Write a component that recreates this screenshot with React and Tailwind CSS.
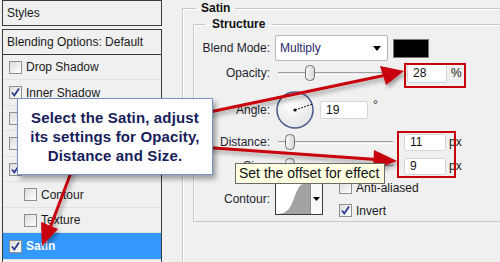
import React from "react";

function Check({ checked }) {
  return (
    <span className="inline-flex w-[13px] h-[13px] shrink-0 border border-[#8e8f8f] bg-gradient-to-br from-[#dcdcdc] to-[#ffffff] items-center justify-center">
      {checked && (
        <svg width="11" height="11" viewBox="0 0 11 11">
          <path d="M2 5.5 L4.3 8.5 L9 1.5" fill="none" stroke="#2a3a8f" strokeWidth="1.8" />
        </svg>
      )}
    </span>
  );
}

function Row({ h, label, checked, sub, selected, last }) {
  return (
    <div
      className={`flex items-center ${h} ${sub ? "pl-[21px]" : "pl-[6px]"} gap-[4px] ${
        selected ? "bg-[#3399ff] text-white font-bold" : "border-b border-[#e2e2e2] text-[#1a1a1a]"
      }`}
    >
      <Check checked={checked} />
      <span className="text-[12px] leading-none">{label}</span>
    </div>
  );
}

function Thumb() {
  return (
    <svg width="10" height="16" viewBox="0 0 10 16">
      <defs>
        <linearGradient id="tg" x1="0" x2="1">
          <stop offset="0" stopColor="#fbfbfb" />
          <stop offset="1" stopColor="#d6d6d6" />
        </linearGradient>
      </defs>
      <rect x="0.5" y="0.5" width="9" height="15" rx="4" fill="url(#tg)" stroke="#6f6f6f" />
    </svg>
  );
}

function Slider({ w, pos }) {
  return (
    <div className={`relative h-[16px] flex items-center ${w}`}>
      <div className="w-full h-[3px] border-t border-[#a0a0a0] border-b border-b-white bg-[#e6e6e6]" />
      <div className={`absolute top-0 ${pos}`}>
        <Thumb />
      </div>
    </div>
  );
}

function Input({ w, h, value }) {
  return (
    <div className={`${w} ${h} bg-white border border-[#d6d6d6] rounded-[2px] flex items-center pl-[5px] text-[12px] text-[#111]`}>
      {value}
    </div>
  );
}

export default function App() {
  return (
    <div
      className="relative w-[500px] h-[262px] overflow-hidden bg-[#f0f0f0] flex text-[#1a1a1a]"
      style={{ fontFamily: '"Liberation Sans", Arial, sans-serif' }}
    >
      {/* Left list panel */}
      <div className="w-[162px] shrink-0 pl-[2px] flex flex-col">
        <div className="h-[26px] border border-[#3c3c3c] flex items-center pl-[4px] text-[12px]">Styles</div>
        <div className="mt-[3px] flex-1 border-x border-t border-[#3c3c3c] flex flex-col">
          <div className="h-[25px] border-b border-[#3c3c3c] flex items-center pl-[4px] text-[12px]">
            Blending Options: Default
          </div>
          <Row h="h-[25px]" label="Drop Shadow" />
          <Row h="h-[26px]" label="Inner Shadow" checked />
          <Row h="h-[25px]" label="Outer Glow" />
          <Row h="h-[26px]" label="Inner Glow" />
          <Row h="h-[25px]" label="Bevel and Emboss" checked />
          <Row h="h-[26px]" label="Contour" sub />
          <Row h="h-[25px]" label="Texture" sub />
          <Row h="h-[26px]" label="Satin" checked selected />
          <div className="flex-1 border-t border-[#e2e2e2]" />
        </div>
      </div>

      {/* Right area */}
      <div className="ml-[20px] shrink-0">
        <fieldset className="w-[340px] mt-[1px] h-[300px] border border-[#c8c8c8] shadow-[inset_1px_1px_0_#ffffff]">
          <legend className="ml-[13px] px-[5px] text-[12px] leading-[14px] font-bold text-[#111]">Satin</legend>
          <fieldset className="ml-[10px] mt-[2px] w-[330px] border border-[#c8c8c8] shadow-[inset_1px_1px_0_#ffffff] pb-[6px]">
            <legend className="ml-[11px] px-[7px] text-[12px] leading-[14px] font-bold text-[#111]">Structure</legend>

            {/* Blend Mode */}
            <div className="mt-[4px] h-[26px] flex items-center">
              <div className="w-[76px] text-right text-[12px] text-[#1e1e2e]">Blend Mode:</div>
              <div className="ml-[5px] w-[113px] h-[26px] bg-white border border-[#b5b5b5] rounded-[2px] flex items-center justify-between pl-[4px] pr-[6px]">
                <span className="text-[12px] text-[#1f2566]">Multiply</span>
                <svg width="8" height="5" viewBox="0 0 8 5">
                  <path d="M0 0 L8 0 L4 5 Z" fill="#000" />
                </svg>
              </div>
              <div className="ml-[5px] w-[36px] h-[19px] bg-black border border-[#7a7a7a]" />
            </div>

            {/* Opacity */}
            <div className="mt-[1px] h-[22px] flex items-center">
              <div className="w-[76px] text-right text-[12px] text-[#1e1e2e]">Opacity:</div>
              <div className="ml-[8px]">
                <Slider w="w-[122px]" pos="left-[27px]" />
              </div>
              <div className="ml-[7px]">
                <Input w="w-[40px]" h="h-[19px]" value="28" />
              </div>
              <span className="ml-[4px] text-[12px]">%</span>
            </div>

            {/* Angle */}
            <div className="mt-[5px] h-[42px] flex items-center">
              <div className="w-[76px] text-right text-[12px] text-[#1e1e2e]">Angle:</div>
              <div className="ml-[6px] w-[38px] h-[38px]">
                <svg width="38" height="38" viewBox="0 0 38 38">
                  <defs>
                    <radialGradient id="cg" cx="0.4" cy="0.35" r="0.7">
                      <stop offset="0" stopColor="#ffffff" />
                      <stop offset="1" stopColor="#e4e4e4" />
                    </radialGradient>
                  </defs>
                  <circle cx="19" cy="19" r="18" fill="url(#cg)" stroke="#47598a" strokeWidth="1.5" />
                  <line x1="19" y1="19" x2="36" y2="13.2" stroke="#111" strokeWidth="1" strokeDasharray="2 1.2" />
                  <circle cx="19" cy="19" r="1.6" fill="#111" />
                </svg>
              </div>
              <div className="ml-[6px]">
                <Input w="w-[48px]" h="h-[18px]" value="19" />
              </div>
              <span className="ml-[5px] self-start mt-[7px] text-[12px]">°</span>
            </div>

            {/* Distance */}
            <div className="h-[22px] flex items-center">
              <div className="w-[76px] text-right text-[12px] text-[#1e1e2e]">Distance:</div>
              <div className="ml-[8px]">
                <Slider w="w-[115px]" pos="left-[7px]" />
              </div>
              <div className="ml-[11px]">
                <Input w="w-[42px]" h="h-[17px]" value="11" />
              </div>
              <span className="ml-[3px] text-[12px]">px</span>
            </div>

            {/* Size */}
            <div className="mt-[2px] h-[22px] flex items-center">
              <div className="w-[76px] text-right text-[12px] text-[#1e1e2e]">Size:</div>
              <div className="ml-[8px]">
                <Slider w="w-[115px]" pos="left-[7px]" />
              </div>
              <div className="ml-[11px]">
                <Input w="w-[42px]" h="h-[17px]" value="9" />
              </div>
              <span className="ml-[3px] text-[12px]">px</span>
            </div>

            {/* Contour */}
            <div className="mt-[6px] h-[32px] flex items-center">
              <div className="w-[76px] text-right text-[12px] text-[#1e1e2e]">Contour:</div>
              <div className="ml-[5px] w-[48px] h-[32px] flex border border-[#3a3a3a] bg-white">
                <svg width="34" height="30" viewBox="0 0 34 30" className="block">
                  <path d="M0 30 C9 30 13 27 17 17 C21 6 23 1 27 0 L34 0 L34 30 Z" fill="#a3a3a3" />
                </svg>
                <div className="flex-1 border-l border-[#8a8a8a] bg-[#fafafa] flex items-center justify-center">
                  <svg width="7" height="4" viewBox="0 0 7 4">
                    <path d="M0 0 L7 0 L3.5 4 Z" fill="#000" />
                  </svg>
                </div>
              </div>
              <div className="ml-[16px] flex flex-col gap-[5px]">
                <div className="flex items-center gap-[4px]">
                  <Check />
                  <span className="text-[12px]">Anti-aliased</span>
                </div>
                <div className="flex items-center gap-[4px]">
                  <Check checked />
                  <span className="text-[12px]">Invert</span>
                </div>
              </div>
            </div>
          </fieldset>
        </fieldset>
      </div>

      {/* Red highlight boxes */}
      <div className="absolute left-[404px] top-[63px] w-[62px] h-[25px] border-2 border-[#c8000a]" />
      <div className="absolute left-[397px] top-[131px] w-[59px] h-[47px] border-2 border-[#c8000a]" />

      {/* Arrows */}
      <svg className="absolute left-0 top-0 pointer-events-none" width="500" height="262" viewBox="0 0 500 262">
        <defs>
          <filter id="sh" x="-20%" y="-20%" width="140%" height="140%">
            <feDropShadow dx="2" dy="3" stdDeviation="2" floodColor="#000" floodOpacity="0.35" />
          </filter>
        </defs>
        <g filter="url(#sh)" fill="#c8000a" stroke="#c8000a">
          <line x1="200" y1="114" x2="384" y2="75.5" strokeWidth="3" />
          <path d="M404 71 L380 66 L386 85 Z" stroke="none" />
          <line x1="200" y1="147" x2="376" y2="159.5" strokeWidth="3" />
          <path d="M397 161 L374 150 L373 170 Z" stroke="none" />
          <line x1="72" y1="170" x2="50" y2="228" strokeWidth="3" />
          <path d="M42 246 L41 222 L58 229 Z" stroke="none" />
        </g>
      </svg>

      {/* Callout */}
      <div className="absolute left-[17px] top-[98px] w-[196px] h-[77px] bg-white border border-[#7394c8] shadow-[3px_4px_5px_rgba(0,0,0,0.35)] flex flex-col items-center justify-center text-[15px] leading-[19px] font-bold text-[#17205a] tracking-[0.15px]">
        <div>Select the Satin, adjust</div>
        <div>its settings for Opacity,</div>
        <div>Distance and Size.</div>
      </div>

      {/* Tooltip */}
      <div className="absolute left-[235px] top-[163px] w-[150px] h-[21px] bg-[#ffffe1] border border-[#6a6a6a] flex items-center pl-[3px] text-[14px] text-[#111]">
        Set the offset for effect
      </div>
    </div>
  );
}
